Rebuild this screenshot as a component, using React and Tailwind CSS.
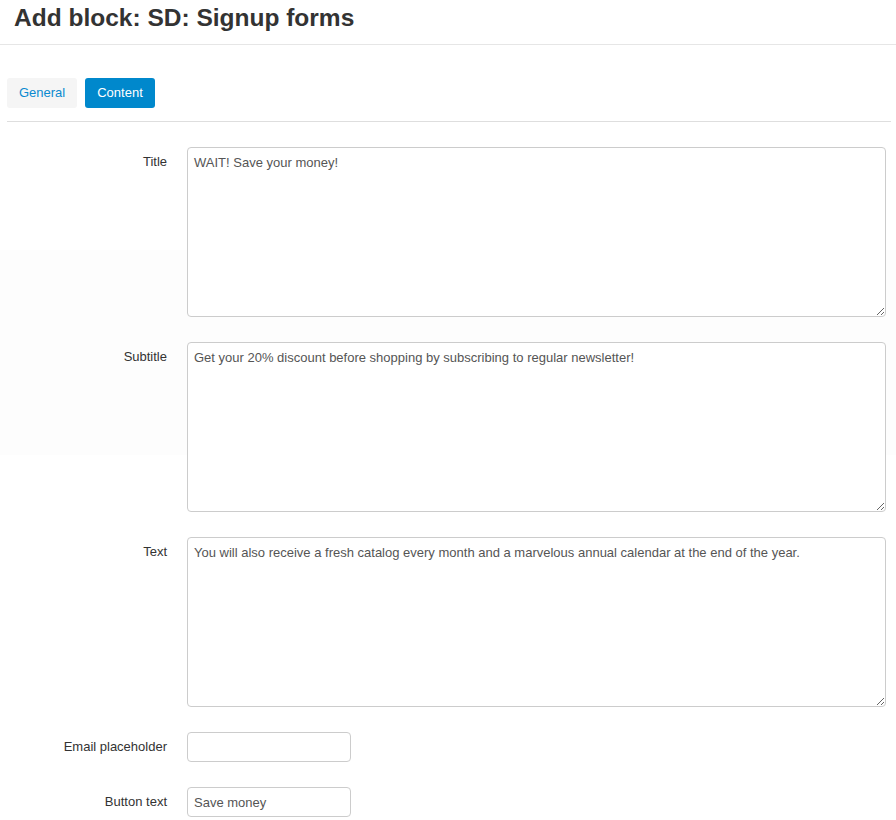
import React from "react";

const font = { fontFamily: '"Liberation Sans", Arial, sans-serif' };

function Row({ label, children }) {
  return (
    <div className="flex mb-[25px]">
      <div className="w-[167px] shrink-0 text-right pt-[6px] text-[13px] leading-[18px] text-[#333]">
        {label}
      </div>
      <div className="ml-[20px] flex-1 mr-[10px]">{children}</div>
    </div>
  );
}

function Area({ value }) {
  return (
    <textarea
      defaultValue={value}
      className="block w-full h-[170px] border border-[#cccccc] rounded-[4px] bg-white px-[6px] pt-[6px] pb-[4px] text-[13px] leading-[18px] text-[#555] outline-none"
      style={font}
    />
  );
}

function Input({ value }) {
  return (
    <input
      defaultValue={value}
      className="block w-[164px] h-[30px] border border-[#cccccc] rounded-[4px] bg-white px-[6px] text-[13px] leading-[18px] text-[#555] outline-none"
      style={font}
    />
  );
}

export default function App() {
  return (
    <div
      className="min-h-[820px] bg-[linear-gradient(to_bottom,#ffffff_250px,#fdfdfd_250px,#fdfdfd_455px,#ffffff_455px)]"
      style={font}
    >
      <div className="h-[45px] border-b border-[#e6e6e6] px-[14px] pt-[3px]">
        <h1 className="text-[24.5px] leading-[30px] font-bold text-[#333]">
          Add block: SD: Signup forms
        </h1>
      </div>
      <div className="px-[7px] pt-[33px] flex gap-[8px]">
        <button className="w-[70px] h-[30px] rounded-[3px] bg-[#f5f5f5] text-[#0b8ad0] text-[13px]">
          General
        </button>
        <button className="w-[70px] h-[30px] rounded-[3px] bg-[#0088cc] text-white text-[13px]">
          Content
        </button>
      </div>
      <div className="mx-[7px] mr-[5px] mt-[13px] border-t border-[#dedede]" />
      <div className="pt-[25px]">
        <Row label="Title">
          <Area value="WAIT! Save your money!" />
        </Row>
        <Row label="Subtitle">
          <Area value="Get your 20% discount before shopping by subscribing to regular newsletter!" />
        </Row>
        <Row label="Text">
          <Area value="You will also receive a fresh catalog every month and a marvelous annual calendar at the end of the year." />
        </Row>
        <Row label="Email placeholder">
          <Input value="" />
        </Row>
        <Row label="Button text">
          <Input value="Save money" />
        </Row>
      </div>
    </div>
  );
}
